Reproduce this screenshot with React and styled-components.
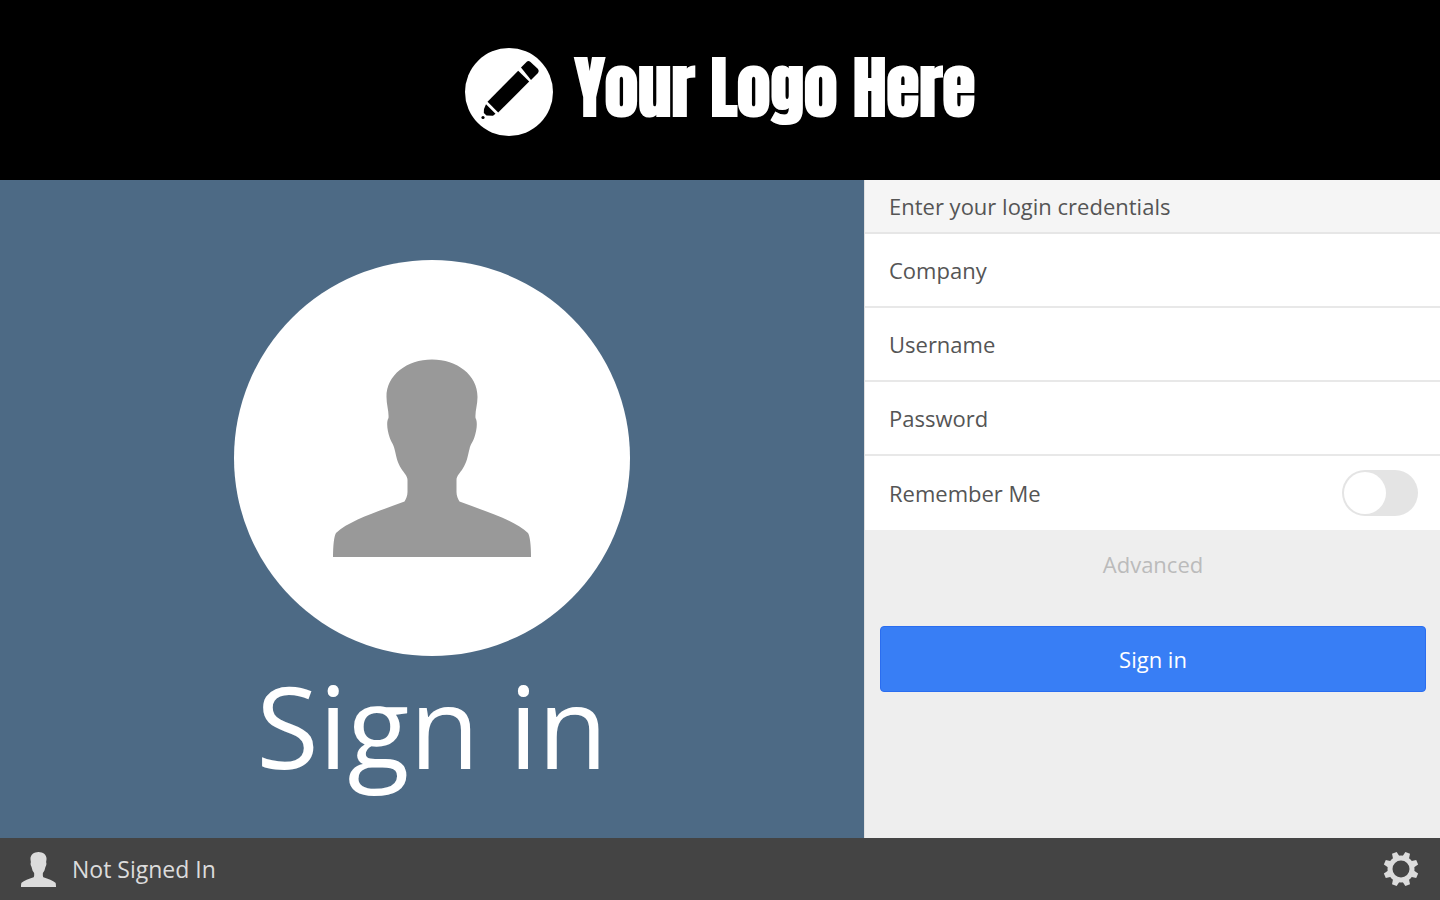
import React, { useState } from 'react';
import styled, { createGlobalStyle } from 'styled-components';

const GlobalStyle = createGlobalStyle`
  * {
    box-sizing: border-box;
  }

  body {
    margin: 0;
    font-family: 'Open Sans', 'Noto Sans', sans-serif;
    color: #555;
  }

  button,
  input {
    font-family: inherit;
  }
`;

const Page = styled.div`
  min-height: 100vh;
  display: flex;
  flex-direction: column;
`;

const Header = styled.header`
  display: flex;
  align-items: flex-start;
  justify-content: center;
  gap: 22px;
  padding: 48px 24px 44px;
  background: #000;
`;

const LogoBadge = styled.svg`
  width: 88px;
  height: 88px;
  flex-shrink: 0;
`;

const LogoText = styled.span`
  color: #fff;
  font-family: Impact, Anton, 'Open Sans Condensed', sans-serif;
  font-size: 67px;
  font-weight: 700;
  line-height: 80px;
  white-space: nowrap;
`;

const Main = styled.main`
  flex: 1;
  display: grid;
  grid-template-columns: 3fr 2fr;

  @media (max-width: 800px) {
    grid-template-columns: 1fr;
  }
`;

const Welcome = styled.section`
  display: flex;
  flex-direction: column;
  align-items: center;
  padding: 80px 24px 24px;
  background: #4d6a85;
`;

const Avatar = styled.div`
  width: 396px;
  height: 396px;
  display: flex;
  align-items: center;
  justify-content: center;
  border-radius: 50%;
  background: #fff;
  color: #999;
`;

const Title = styled.h1`
  margin: 0;
  color: #fff;
  font-size: 114px;
  font-weight: 400;
  line-height: 138px;
`;

const Panel = styled.form`
  border-left: 1px solid #e0e0e0;
  background: #eee;
`;

const PanelHeading = styled.h2`
  margin: 0;
  padding: 0 24px;
  border-bottom: 2px solid #e6e6e6;
  background: #f5f5f5;
  font-size: 22px;
  font-weight: 400;
  line-height: 52px;
`;

const Row = styled.div`
  display: flex;
  align-items: center;
  gap: 16px;
  height: 74px;
  padding: 0 22px 0 24px;
  border-bottom: ${(props) => (props.$last ? 'none' : '2px solid #e8e8e8')};
  background: #fff;
`;

const Label = styled.label`
  flex: ${(props) => (props.$grow ? 1 : 'none')};
  font-size: 22px;
  line-height: 32px;
`;

const Input = styled.input`
  flex: 1;
  min-width: 0;
  height: 48px;
  padding: 0;
  border: none;
  outline: none;
  background: transparent;
  color: #555;
  font-size: 22px;
`;

const Toggle = styled.input`
  appearance: none;
  display: flex;
  justify-content: ${(props) => (props.checked ? 'flex-end' : 'flex-start')};
  width: 76px;
  height: 46px;
  margin: 0;
  padding: 2px;
  border-radius: 23px;
  background: ${(props) => (props.checked ? '#387ef5' : '#e4e4e4')};
  cursor: pointer;

  &::before {
    content: '';
    width: 42px;
    height: 42px;
    border-radius: 50%;
    background: #fff;
  }
`;

const Actions = styled.div`
  display: flex;
  flex-direction: column;
  gap: 28px;
  padding: 0 14px 0 15px;
`;

const AdvancedButton = styled.button`
  height: 68px;
  border: none;
  background: transparent;
  color: #bbb;
  font-size: 22px;
  cursor: pointer;
`;

const SubmitButton = styled.button`
  height: 66px;
  border: 1px solid #2a6df0;
  border-radius: 4px;
  background: #387ef5;
  color: #fff;
  font-size: 22px;
  cursor: pointer;
`;

const Footer = styled.footer`
  display: flex;
  align-items: center;
  justify-content: space-between;
  height: 62px;
  padding: 0 21px;
  background: #444;
  color: #dcdcdc;
`;

const Status = styled.div`
  display: flex;
  align-items: center;
  gap: 16px;
  font-size: 23px;
  line-height: 32px;
`;

const SettingsButton = styled.button`
  display: flex;
  padding: 0;
  border: none;
  background: transparent;
  color: inherit;
  cursor: pointer;
`;

const PersonIcon = ({ size }) => (
  <svg width={size} height={size} viewBox="0 0 198 198" fill="currentColor" aria-hidden="true">
    <path d="M99 .5C124 .5 144.500 16 144.500 38C144.500 46 142 52 142.500 59C145 63 143.500 72 141.500 78C140 83 137.500 85 136.500 90C134.500 98 134 103 129.500 110C127 114 123.500 117 123.500 121V133C123.500 137 125 140 126.500 142.500C154 153 181 161 195 174C197 177 198 187 198 198H0C0 187 1 177 3 174C17 161 44 153 71.500 142.500C73 140 74.500 137 74.500 133V121C74.500 117 71 114 68.500 110C64 103 63.500 98 61.500 90C60.500 85 58 83 56.500 78C54.500 72 53 63 55.500 59C56 52 53.500 46 53.500 38C53.500 16 74 .5 99 .5Z" />
  </svg>
);

const PencilLogo = () => (
  <LogoBadge viewBox="0 0 88 88" aria-hidden="true">
    <circle cx="44" cy="44" r="44" fill="#fff" />
    <path d="M56 19.500L62 13.500Q63.500 12.300 65.500 14L73 21Q74.500 23 73 25L66 32Z" />
    <path d="M53.200 22.800L64.200 33.400L33.200 64.500L22.500 53.800Z" />
    <path d="M21 56.200L30.500 65.700L28 67.800L21.500 67.500L18.800 65L19 61Z" />
    <circle cx="18" cy="69.500" r="1.600" />
  </LogoBadge>
);

const GearIcon = () => (
  <svg width="36" height="36" viewBox="0 0 36 36" aria-hidden="true">
    <circle cx="18" cy="18" r="11" fill="none" stroke="currentColor" strokeWidth="5" />
    {[22.5, 67.5, 112.5, 157.5, 202.5, 247.5, 292.5, 337.5].map((angle) => (
      <path key={angle} d="M14.500 6L15.500 .5H20.500L21.500 6Z" fill="currentColor" transform={`rotate(${angle} 18 18)`} />
    ))}
  </svg>
);

const App = () => {
  const [form, setForm] = useState({ company: '', username: '', password: '' });
  const [remember, setRemember] = useState(false);

  const handleChange = (e) => {
    setForm({ ...form, [e.target.name]: e.target.value });
  };

  return (
    <Page>
      <GlobalStyle />
      <Header>
        <PencilLogo />
        <LogoText>Your Logo Here</LogoText>
      </Header>

      <Main>
        <Welcome>
          <Avatar>
            <PersonIcon size={198} />
          </Avatar>
          <Title>Sign in</Title>
        </Welcome>

        <Panel onSubmit={(e) => e.preventDefault()}>
          <PanelHeading>Enter your login credentials</PanelHeading>
          <Row>
            <Label htmlFor="company">Company</Label>
            <Input id="company" name="company" type="text" value={form.company} onChange={handleChange} />
          </Row>
          <Row>
            <Label htmlFor="username">Username</Label>
            <Input id="username" name="username" type="text" value={form.username} onChange={handleChange} />
          </Row>
          <Row>
            <Label htmlFor="password">Password</Label>
            <Input id="password" name="password" type="password" value={form.password} onChange={handleChange} />
          </Row>
          <Row $last>
            <Label htmlFor="remember" $grow>Remember Me</Label>
            <Toggle
              id="remember"
              type="checkbox"
              checked={remember}
              onChange={(e) => setRemember(e.target.checked)}
            />
          </Row>
          <Actions>
            <AdvancedButton type="button">Advanced</AdvancedButton>
            <SubmitButton type="submit">Sign in</SubmitButton>
          </Actions>
        </Panel>
      </Main>

      <Footer>
        <Status>
          <PersonIcon size={35} />
          Not Signed In
        </Status>
        <SettingsButton type="button" aria-label="Settings">
          <GearIcon />
        </SettingsButton>
      </Footer>
    </Page>
  );
};

export default App;
